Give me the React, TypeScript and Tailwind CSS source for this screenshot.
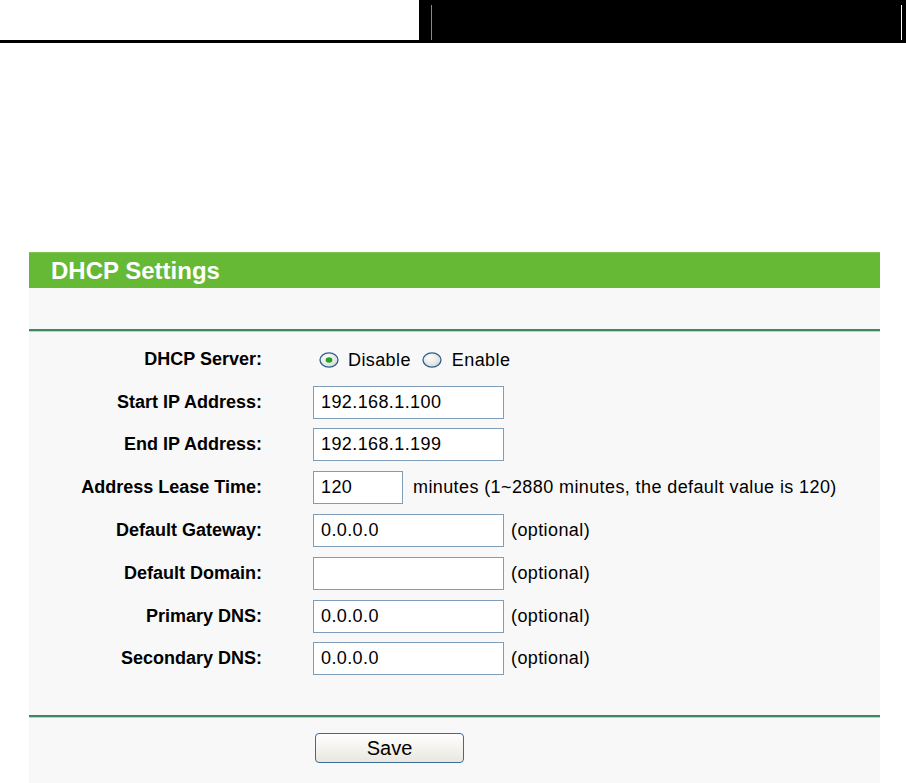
import React from "react";

const font = { fontFamily: '"Liberation Sans", Arial, sans-serif' };

function Radio({ checked }: { checked?: boolean }) {
  return (
    <svg width="20" height="16" viewBox="0 0 20 16" className="shrink-0">
      <defs>
        <radialGradient id={checked ? "rg1" : "rg2"} cx="40%" cy="35%" r="70%">
          <stop offset="0%" stopColor="#ffffff" />
          <stop offset="100%" stopColor="#d8d8d2" />
        </radialGradient>
      </defs>
      <ellipse cx="10" cy="8" rx="9" ry="7.2" fill={`url(#${checked ? "rg1" : "rg2"})`} stroke="#2f5f8f" strokeWidth="1.3" />
      {checked && <ellipse cx="10" cy="8" rx="3.4" ry="2.8" fill="#23a323" />}
    </svg>
  );
}

function TextBox({ value, width = "w-[191px]" }: { value: string; width?: string }) {
  return (
    <div
      className={`${width} h-[33px] border border-[#7f9db9] bg-white px-[7px] flex items-center text-[18px] tracking-[0.4px] text-black`}
    >
      {value}
    </div>
  );
}

function Row({ label, children }: { label: string; children: React.ReactNode }) {
  return (
    <div className="flex items-center h-[42.8px]">
      <div className="w-[233px] text-right text-[18px] font-bold text-black">{label}</div>
      <div className="ml-[51px] flex items-center">{children}</div>
    </div>
  );
}

const optional = <span className="ml-[7px] text-[18px] tracking-[0.4px] text-black">(optional)</span>;

export default function App() {
  return (
    <div className="w-[906px] h-[783px] bg-white overflow-hidden" style={font}>
      {/* top page bar */}
      <div className="flex h-[40px]">
        <div className="w-[419px]" />
        <div className="flex-1 bg-black flex pt-[5px]">
          <div className="ml-[12px] w-px h-[35px] bg-[#8a8a8a]" />
          <div className="flex-1" />
          <div className="mr-[4px] w-px h-[35px] bg-white" />
        </div>
      </div>
      <div className="h-[3px] bg-black" />

      <div className="mt-[209px] ml-[29px] w-[851px] bg-[#f8f8f8]">
        <div className="h-[36px] bg-[#66b934] border-t border-[#7cc652] flex items-center pl-[22px]">
          <span className="text-white font-bold text-[24px] leading-none">DHCP Settings</span>
        </div>
        <div className="h-[41px]" />
        <div className="h-[2px] bg-[#3c8a5b]" />
        <div className="h-px bg-[#b9d6c3]" />

        <div className="pt-[6px] pb-[35px]">
          <Row label="DHCP Server:">
            <div className="flex items-center text-[18px] tracking-[0.4px] text-black pl-[6px] pt-[2px]">
              <Radio checked />
              <span className="ml-[9px]">Disable</span>
              <span className="ml-[11px]"><Radio /></span>
              <span className="ml-[10px]">Enable</span>
            </div>
          </Row>
          <Row label="Start IP Address:">
            <TextBox value="192.168.1.100" />
          </Row>
          <Row label="End IP Address:">
            <TextBox value="192.168.1.199" />
          </Row>
          <Row label="Address Lease Time:">
            <TextBox value="120" width="w-[90px]" />
            <span className="ml-[10px] text-[18px] tracking-[0.4px] text-black">
              minutes (1~2880 minutes, the default value is 120)
            </span>
          </Row>
          <Row label="Default Gateway:">
            <TextBox value="0.0.0.0" />
            {optional}
          </Row>
          <Row label="Default Domain:">
            <TextBox value="" />
            {optional}
          </Row>
          <Row label="Primary DNS:">
            <TextBox value="0.0.0.0" />
            {optional}
          </Row>
          <Row label="Secondary DNS:">
            <TextBox value="0.0.0.0" />
            {optional}
          </Row>
        </div>

        <div className="h-[2px] bg-[#3c8a5b]" />
        <div className="h-px bg-[#b9d6c3]" />
        <div className="pt-[15px] pb-[30px] pl-[286px]">
          <button className="w-[149px] h-[30px] rounded-[4px] border border-[#3b6a9c] bg-gradient-to-b from-white to-[#e9e7de] text-[20px] text-black leading-none">
            Save
          </button>
        </div>
      </div>
    </div>
  );
}
